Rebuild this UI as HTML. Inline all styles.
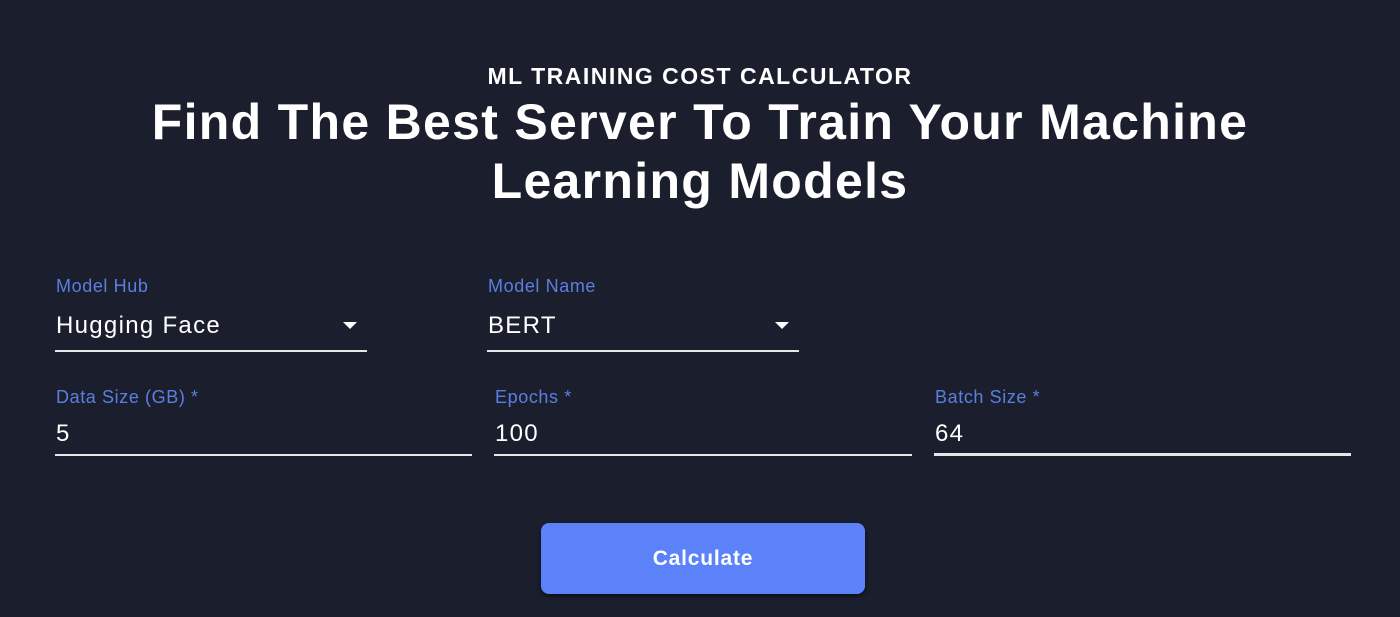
<!DOCTYPE html>
<html><head><style>
body{margin:0;width:1400px;height:617px;background:#1b1e2d;font-family:"Liberation Sans",sans-serif;color:#fff;position:relative;overflow:hidden}
.a{position:absolute}
.sub{top:63px;left:0;width:1400px;text-align:center;font-weight:bold;font-size:23px;letter-spacing:1.5px}
.t{left:0;width:1400px;text-align:center;font-weight:bold;font-size:50px;letter-spacing:1.3px;line-height:59px;top:93px}
.lab{color:#5b7fe0;font-size:18px;letter-spacing:0.6px}
.val{font-size:24px;letter-spacing:1.3px}
.line{height:2px;background:#e6e6e6}
.arrow{width:0;height:0;border-left:7px solid transparent;border-right:7px solid transparent;border-top:7px solid #fff}
.btn{left:541px;top:523px;width:324px;height:71px;background:#5b82f8;border-radius:8px;box-shadow:0 2px 4px rgba(0,0,0,.6);text-align:center;line-height:71px;font-weight:bold;font-size:21px;letter-spacing:0.8px}
</style></head><body>
<div class="a sub">ML TRAINING COST CALCULATOR</div>
<div class="a t">Find The Best Server To Train Your Machine<br>Learning Models</div>

<div class="a lab" style="left:56px;top:276px">Model Hub</div>
<div class="a val" style="left:56px;top:312px">Hugging Face</div>
<div class="a arrow" style="left:343px;top:322px"></div>
<div class="a line" style="left:55px;top:350px;width:312px"></div>

<div class="a lab" style="left:488px;top:276px">Model Name</div>
<div class="a val" style="left:488px;top:312px">BERT</div>
<div class="a arrow" style="left:775px;top:322px"></div>
<div class="a line" style="left:487px;top:350px;width:312px"></div>

<div class="a lab" style="left:56px;top:387px">Data Size (GB) *</div>
<div class="a val" style="left:56px;top:420px">5</div>
<div class="a line" style="left:55px;top:454px;width:417px"></div>

<div class="a lab" style="left:495px;top:387px">Epochs *</div>
<div class="a val" style="left:495px;top:420px">100</div>
<div class="a line" style="left:494px;top:454px;width:418px"></div>

<div class="a lab" style="left:935px;top:387px">Batch Size *</div>
<div class="a val" style="left:935px;top:420px">64</div>
<div class="a line" style="left:934px;top:453px;width:417px;height:3px"></div>

<div class="a btn">Calculate</div>
</body></html>
